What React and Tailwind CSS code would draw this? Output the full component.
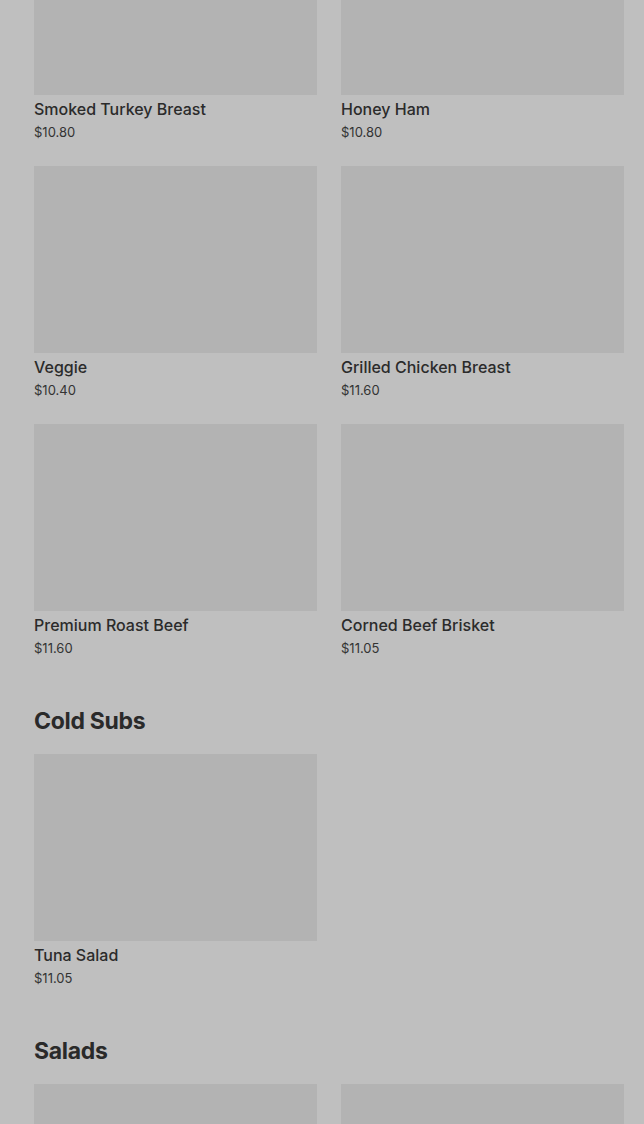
import React from 'react';

const sections = [
  {
    title: null,
    items: [
      { name: 'Smoked Turkey Breast', price: '$10.80' },
      { name: 'Honey Ham', price: '$10.80' },
      { name: 'Veggie', price: '$10.40' },
      { name: 'Grilled Chicken Breast', price: '$11.60' },
      { name: 'Premium Roast Beef', price: '$11.60' },
      { name: 'Corned Beef Brisket', price: '$11.05' },
    ],
  },
  {
    title: 'Cold Subs',
    items: [{ name: 'Tuna Salad', price: '$11.05' }],
  },
  {
    title: 'Salads',
    // rest of this section sits below the fold
    items: [{ name: null }, { name: null }],
  },
];

const MenuCard = ({ item }) => (
  <div className="flex flex-col">
    <div className="h-[187px] bg-[#b3b3b3]" />
    {item.name && (
      <>
        <div className="mt-[4px] text-[16px] leading-[20px] font-medium text-[#2b2b2b]">{item.name}</div>
        <div className="mt-[4px] text-[13px] leading-[18px] text-[#333333]">{item.price}</div>
      </>
    )}
  </div>
);

export default function App() {
  return (
    <div
      className="h-[1124px] overflow-hidden bg-[#bfbfbf] pl-[34px] pr-[20px]"
      style={{ fontFamily: 'Inter, "Open Sans", sans-serif' }}
    >
      <div className="-mt-[92px] flex flex-col gap-[50px]">
        {sections.map((section, i) => (
          <section key={i}>
            {section.title && (
              <h2 className="mb-[19px] text-[23px] leading-[28px] font-bold tracking-[-0.3px] text-[#2a2a2a]">
                {section.title}
              </h2>
            )}
            <div className="grid grid-cols-2 gap-x-[24px] gap-y-[25px]">
              {section.items.map((item, j) => (
                <MenuCard key={j} item={item} />
              ))}
            </div>
          </section>
        ))}
      </div>
    </div>
  );
}
